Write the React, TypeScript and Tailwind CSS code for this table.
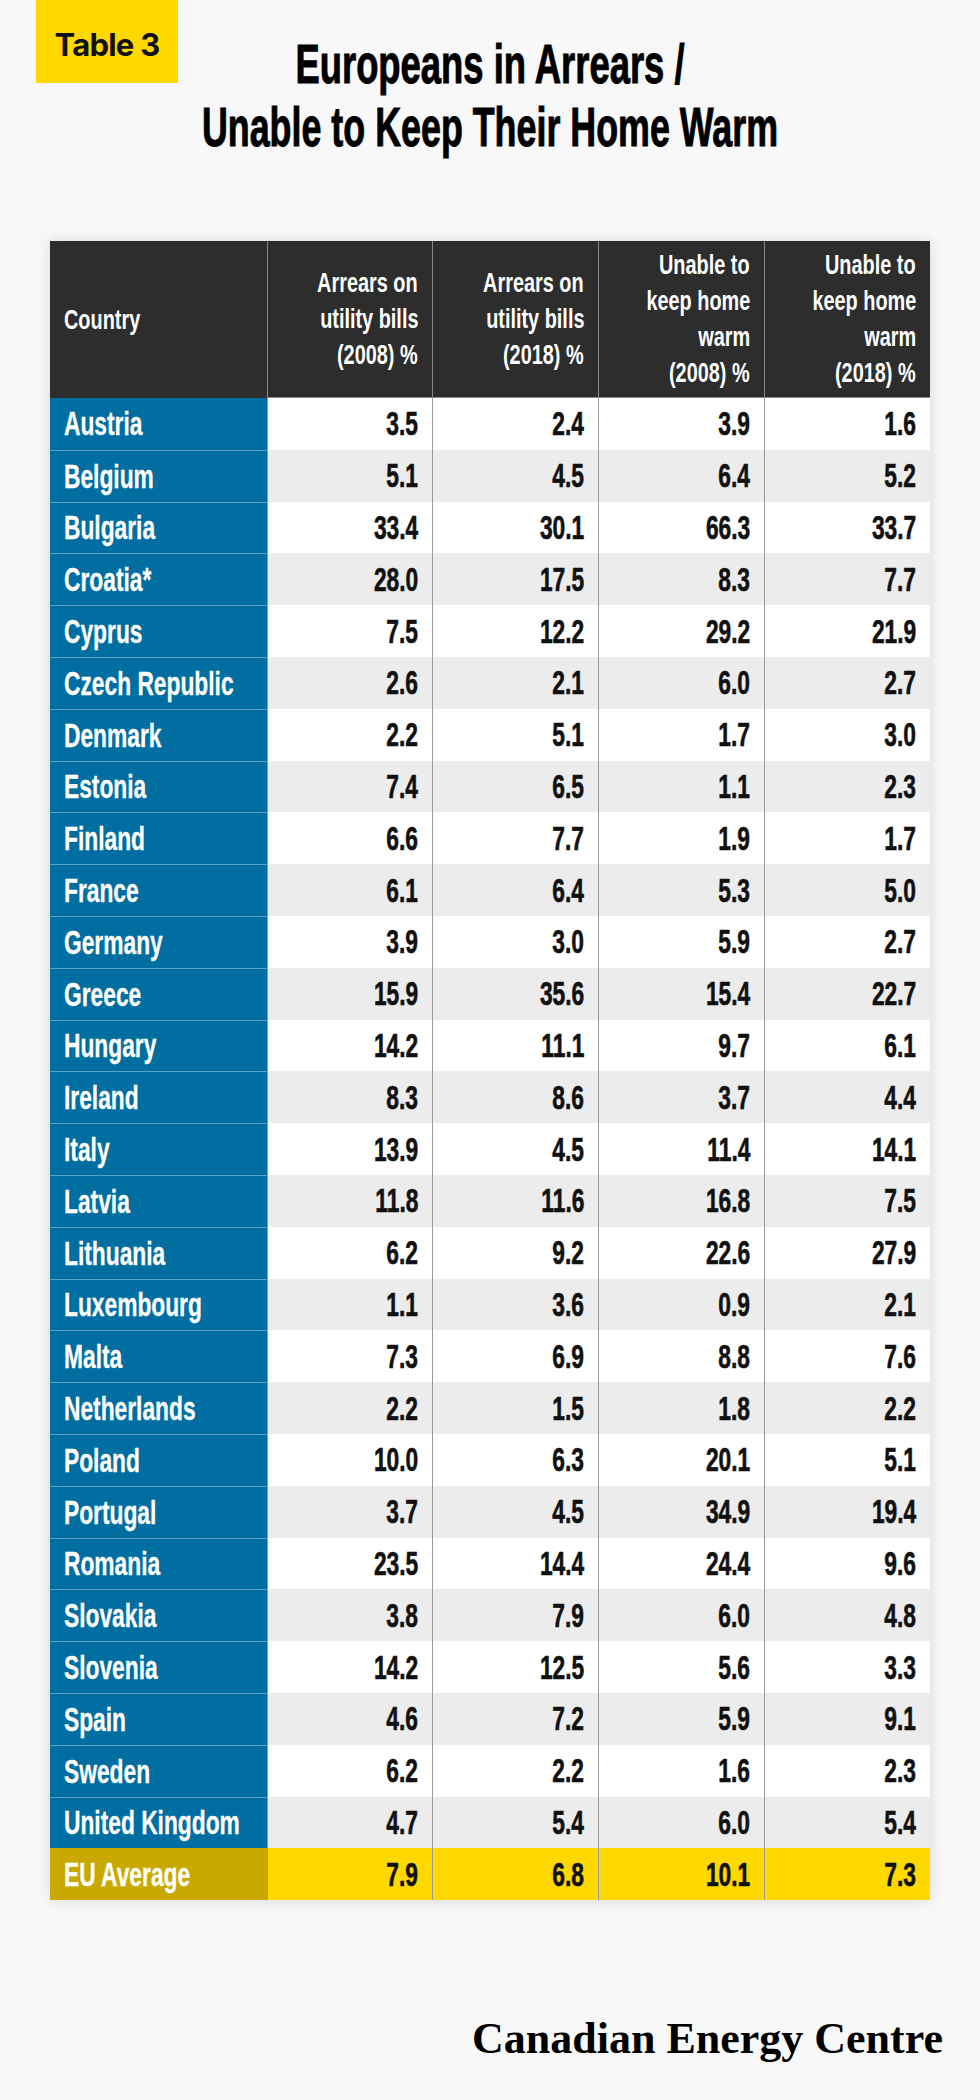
import React from "react";

type Row = [string, string, string, string, string];

const rows: Row[] = [
  ["Austria", "3.5", "2.4", "3.9", "1.6"],
  ["Belgium", "5.1", "4.5", "6.4", "5.2"],
  ["Bulgaria", "33.4", "30.1", "66.3", "33.7"],
  ["Croatia*", "28.0", "17.5", "8.3", "7.7"],
  ["Cyprus", "7.5", "12.2", "29.2", "21.9"],
  ["Czech Republic", "2.6", "2.1", "6.0", "2.7"],
  ["Denmark", "2.2", "5.1", "1.7", "3.0"],
  ["Estonia", "7.4", "6.5", "1.1", "2.3"],
  ["Finland", "6.6", "7.7", "1.9", "1.7"],
  ["France", "6.1", "6.4", "5.3", "5.0"],
  ["Germany", "3.9", "3.0", "5.9", "2.7"],
  ["Greece", "15.9", "35.6", "15.4", "22.7"],
  ["Hungary", "14.2", "11.1", "9.7", "6.1"],
  ["Ireland", "8.3", "8.6", "3.7", "4.4"],
  ["Italy", "13.9", "4.5", "11.4", "14.1"],
  ["Latvia", "11.8", "11.6", "16.8", "7.5"],
  ["Lithuania", "6.2", "9.2", "22.6", "27.9"],
  ["Luxembourg", "1.1", "3.6", "0.9", "2.1"],
  ["Malta", "7.3", "6.9", "8.8", "7.6"],
  ["Netherlands", "2.2", "1.5", "1.8", "2.2"],
  ["Poland", "10.0", "6.3", "20.1", "5.1"],
  ["Portugal", "3.7", "4.5", "34.9", "19.4"],
  ["Romania", "23.5", "14.4", "24.4", "9.6"],
  ["Slovakia", "3.8", "7.9", "6.0", "4.8"],
  ["Slovenia", "14.2", "12.5", "5.6", "3.3"],
  ["Spain", "4.6", "7.2", "5.9", "9.1"],
  ["Sweden", "6.2", "2.2", "1.6", "2.3"],
  ["United Kingdom", "4.7", "5.4", "6.0", "5.4"],
];

const headers: string[][] = [
  ["Arrears on", "utility bills", "(2008) %"],
  ["Arrears on", "utility bills", "(2018) %"],
  ["Unable to", "keep home", "warm", "(2008) %"],
  ["Unable to", "keep home", "warm", "(2018) %"],
];

const gridCols = "grid grid-cols-[217px_165px_166px_166px_166px]";

function NumCell({ value, bg }: { value: string; bg: string }) {
  return (
    <div className={`flex items-center justify-end pr-[14px] border-l border-[#9a9a9a] ${bg}`}>
      <span className="inline-block origin-right scale-x-[0.69] whitespace-nowrap text-[33px] leading-none font-bold text-[#111111] [-webkit-text-stroke:0.6px_#111111]">
        {value}
      </span>
    </div>
  );
}

export default function App() {
  return (
    <div className="w-[980px] min-h-[2100px] bg-[#f8f8f8] flex flex-col font-['Liberation_Sans',Arial,sans-serif]">
      {/* Heading */}
      <header className="relative">
        <div className="absolute top-0 left-[36px] w-[142px] h-[83px] bg-[#ffd800] flex items-center justify-center pt-[6px]">
          <span className="font-['Inter',sans-serif] font-bold text-[31px] tracking-tight text-[#111111] leading-none">
            Table 3
          </span>
        </div>
        <h1 className="pt-[32px] text-center text-[56px] leading-[63px] font-bold text-black [-webkit-text-stroke:1px_#000000]">
          <span className="block origin-center scale-x-[0.65] whitespace-nowrap">Europeans in Arrears /</span>
          <span className="block origin-center scale-x-[0.64] whitespace-nowrap">Unable to Keep Their Home Warm</span>
        </h1>
      </header>

      {/* Table */}
      <div className="mt-[83px] mx-[50px] shadow-[0_0_14px_rgba(0,0,0,0.13)]">
        <div className={`${gridCols} h-[157px] bg-[#2d2d2d] text-white`}>
          <div className="flex items-center pl-[14px]">
            <span className="inline-block origin-left scale-x-[0.71] text-[28px] leading-[36px] font-bold">Country</span>
          </div>
          {headers.map((lines, i) => (
            <div
              key={i}
              className="flex flex-col items-end justify-center pr-[14px] border-l border-b border-[#8a8a8a]"
            >
              {lines.map((l) => (
                <span
                  key={l}
                  className="inline-block origin-right scale-x-[0.71] whitespace-nowrap text-[28px] leading-[36px] font-bold"
                >
                  {l}
                </span>
              ))}
            </div>
          ))}
        </div>

        {rows.map((r, i) => {
          const bg = i % 2 === 0 ? "bg-white" : "bg-[#ececec]";
          return (
            <div key={r[0]} className={`${gridCols} h-[51.8px]`}>
              <div
                className={`flex items-center pl-[14px] bg-[#006ea0] ${
                  i > 0 ? "border-t border-[#5f9fc4]" : ""
                }`}
              >
                <span className="inline-block origin-left scale-x-[0.69] whitespace-nowrap text-[33px] leading-none font-bold text-white [-webkit-text-stroke:0.3px_#ffffff]">
                  {r[0]}
                </span>
              </div>
              <NumCell value={r[1]} bg={bg} />
              <NumCell value={r[2]} bg={bg} />
              <NumCell value={r[3]} bg={bg} />
              <NumCell value={r[4]} bg={bg} />
            </div>
          );
        })}

        <div className={`${gridCols} h-[51.8px]`}>
          <div className="flex items-center pl-[14px] bg-[#c9a900]">
            <span className="inline-block origin-left scale-x-[0.69] whitespace-nowrap text-[33px] leading-none font-bold text-white [-webkit-text-stroke:0.3px_#ffffff]">
              EU Average
            </span>
          </div>
          <NumCell value="7.9" bg="bg-[#ffd800]" />
          <NumCell value="6.8" bg="bg-[#ffd800]" />
          <NumCell value="10.1" bg="bg-[#ffd800]" />
          <NumCell value="7.3" bg="bg-[#ffd800]" />
        </div>
      </div>

      {/* Footer */}
      <div className="mt-[117px] pr-[37px] text-right font-['Liberation_Serif',serif] font-bold text-[44px] leading-[44px] text-black">
        Canadian Energy Centre
      </div>
    </div>
  );
}
